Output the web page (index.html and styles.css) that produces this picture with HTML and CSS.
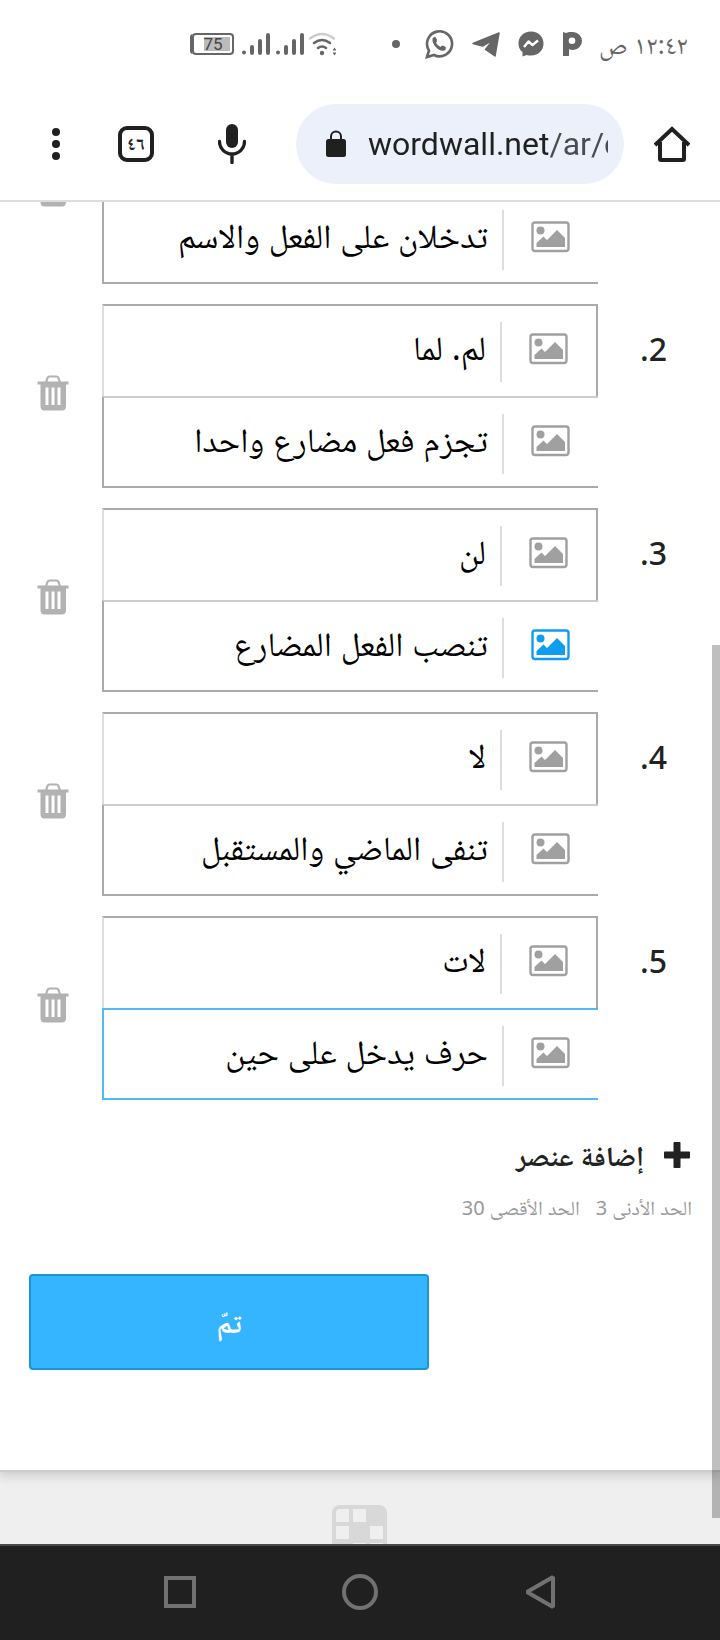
FILE: index.html
```html
<!DOCTYPE html>
<html lang="ar" dir="rtl">

<head>
    <meta charset="UTF-8">
    <meta name="viewport" content="width=device-width, initial-scale=1.0">
    <title>Wordwall</title>
    <link rel="stylesheet" href="styles.css">
</head>

<body>
    <!-- shared icons -->
    <svg class="sprite" aria-hidden="true">
        <symbol id="picture" viewBox="0 0 40 32">
            <rect x="1.5" y="1.5" width="36" height="28.5" rx="2.5" fill="none" stroke="currentColor" stroke-width="2.4" />
            <circle cx="9.5" cy="9.5" r="4" fill="currentColor" />
            <path d="M5.5 26v-4l7-6.5 3.5 3.5 10-10 8 8v9z" fill="currentColor" />
        </symbol>
        <symbol id="trash" viewBox="0 0 32 36">
            <path d="M9 7.500l1.500-4.500q.6-1.500 2-1.500h7q1.400 0 2 1.500l1.500 4.500" fill="none" stroke="currentColor" stroke-width="2.200" />
            <path fill-rule="evenodd" fill="currentColor" d="M.5 6.500h31v3H29V31q0 4.500-4 4.500H7.500q-4 0-4-4.500V9.500h-3zM8.500 12.500v17.500h3V12.500zM14.500 12.500v17.500h3V12.500zM20.500 12.500v17.500h3V12.500z" />
        </symbol>
    </svg>

    <header class="status">
        <span class="time">١٢:٤٢ ص</span>
        <div class="apps">
            <svg width="20" height="26" viewBox="0 0 20 26">
                <path fill-rule="evenodd" fill="#666" d="M1 1l3 1 3-1h4a8.500 8.500 0 0 1 0 18q-3 0-4-1v7H1zM10 6.500a3.300 3.300 0 1 0 0 6.600 3.300 3.300 0 0 0 0-6.600z" />
            </svg>
            <svg width="26" height="26" viewBox="0 0 26 26">
                <path fill="#666" d="M13 .5C5.500.5.5 5.700.5 12.500c0 4 1.500 6.500 4 8.500v4.500l4.200-1.500c1.300.4 2.700.5 4.300.5 7.500 0 12.500-5.200 12.500-12S20.500.5 13 .5z" />
                <path fill="none" stroke="#fff" stroke-width="2.400" stroke-linejoin="round" d="M6 16l4.500-5.500 4 3.500 5.500-4.500" />
            </svg>
            <svg width="28" height="26" viewBox="0 0 28 26">
                <path fill="#666" stroke="#666" stroke-width="1.500" stroke-linejoin="round" d="M1 12.500L27 2l-4 23-9.500-6.500 7.500-9.500-10.500 6z" />
            </svg>
            <svg width="30" height="32" viewBox="0 0 30 32">
                <path fill="none" stroke="#666" stroke-width="2.600" d="M3 29l2-6.500A12.500 12.500 0 1 1 10 27z" />
                <path fill="#666" d="M8.500 10.500q1-2 3-1.500 2 2.500 1.500 4.500l-1 1.200q1.500 3 4.500 4.300l1.500-1.500q2 0 4 2 0 2.500-2.500 3.200-4 .5-8-4-3.500-4-3-8.200z" />
            </svg>
            <svg width="8" height="8" viewBox="0 0 8 8"><circle cx="4" cy="4" r="4" fill="#666" /></svg>
        </div>
        <div class="signals">
            <svg width="28" height="24" viewBox="0 0 28 24" fill="none" stroke-linecap="round">
                <path stroke="#ccc" stroke-width="2.200" d="M2 6.500q12-9 24 0" />
                <path stroke="#666" stroke-width="2.600" d="M6 11q8-6 16 0M10 16q4-3 8 0" />
                <circle cx="14" cy="21" r="2.200" fill="#666" />
                <path fill="#666" d="M24.500 18.500l2-3 2 3zM24.500 20.500l2 3 2-3z" />
            </svg>
            <svg class="bars" width="62" height="22" viewBox="0 0 62 22" stroke="#666" stroke-width="4" stroke-linecap="round">
                <path d="M2 19.500v.1M10 14v6M18 8v12M26 2v18M36 19.500v.1M44 14v6M52 8v12M60 2v18" />
            </svg>
            <span class="battery"><span class="level">75</span></span>
        </div>
    </header>

    <nav class="toolbar">
        <button class="tool" type="button" aria-label="الصفحة الرئيسية">
            <svg width="36" height="36" viewBox="0 0 36 36" fill="none" stroke="#202020" stroke-width="4">
                <path stroke-linejoin="round" d="M6 16v17q0 1 1 1h22q1 0 1-1V16" />
                <path d="M1 19L18 3l17 16" />
            </svg>
        </button>
        <div class="address">
            <input class="url" type="text" aria-label="العنوان" value="wordwall.net/ar/create">
            <svg width="20" height="28" viewBox="0 0 20 28">
                <rect x="0" y="9" width="20" height="18" rx="2.500" fill="#202020" />
                <path d="M5 10V6.500a5 5 0 0 1 10 0V10" fill="none" stroke="#202020" stroke-width="2" />
            </svg>
        </div>
        <button class="tool" type="button" aria-label="بحث صوتي">
            <svg width="28" height="40" viewBox="0 0 28 40">
                <rect x="8" y="0" width="12" height="24" rx="6" fill="#202020" />
                <path d="M1.500 17.500a12.500 12.500 0 0 0 25 0M14 31v7.500" fill="none" stroke="#202020" stroke-width="3.400" stroke-linecap="round" />
            </svg>
        </button>
        <button class="tool" type="button" aria-label="علامات التبويب"><span class="tabs">٤٦</span></button>
        <button class="tool menu" type="button" aria-label="القائمة">
            <svg width="8" height="32" viewBox="0 0 8 32" fill="#202020">
                <circle cx="4" cy="4" r="4" />
                <circle cx="4" cy="16" r="4" />
                <circle cx="4" cy="28" r="4" />
            </svg>
        </button>
    </nav>

    <main class="view">
        <form class="editor">
            <ul class="items">
                <li class="item">
                    <span class="number"></span>
                    <div class="fields">
                        <div class="field word">
                            <input type="text" aria-label="الكلمة الأولى">
                        </div>
                        <div class="field meaning">
                            <button class="pic" type="button" aria-label="إضافة صورة"><svg width="40" height="32"><use href="#picture" /></svg></button>
                            <input type="text" aria-label="التعريف الأول" value="تدخلان على الفعل والاسم">
                        </div>
                    </div>
                    <button class="delete" type="button" aria-label="حذف"><svg width="32" height="36"><use href="#trash" /></svg></button>
                </li>
                <li class="item">
                    <label class="number" for="word2">2.</label>
                    <div class="fields">
                        <div class="field word">
                            <button class="pic" type="button" aria-label="إضافة صورة"><svg width="40" height="32"><use href="#picture" /></svg></button>
                            <input type="text" id="word2" value="لم. لما">
                        </div>
                        <div class="field meaning">
                            <button class="pic" type="button" aria-label="إضافة صورة"><svg width="40" height="32"><use href="#picture" /></svg></button>
                            <input type="text" aria-label="التعريف 2" value="تجزم فعل مضارع واحدا">
                        </div>
                    </div>
                    <button class="delete" type="button" aria-label="حذف"><svg width="32" height="36"><use href="#trash" /></svg></button>
                </li>
                <li class="item">
                    <label class="number" for="word3">3.</label>
                    <div class="fields">
                        <div class="field word">
                            <button class="pic" type="button" aria-label="إضافة صورة"><svg width="40" height="32"><use href="#picture" /></svg></button>
                            <input type="text" id="word3" value="لن">
                        </div>
                        <div class="field meaning">
                            <button class="pic active" type="button" aria-label="إضافة صورة"><svg width="40" height="32"><use href="#picture" /></svg></button>
                            <input type="text" aria-label="التعريف 3" value="تنصب الفعل المضارع">
                        </div>
                    </div>
                    <button class="delete" type="button" aria-label="حذف"><svg width="32" height="36"><use href="#trash" /></svg></button>
                </li>
                <li class="item">
                    <label class="number" for="word4">4.</label>
                    <div class="fields">
                        <div class="field word">
                            <button class="pic" type="button" aria-label="إضافة صورة"><svg width="40" height="32"><use href="#picture" /></svg></button>
                            <input type="text" id="word4" value="لا">
                        </div>
                        <div class="field meaning">
                            <button class="pic" type="button" aria-label="إضافة صورة"><svg width="40" height="32"><use href="#picture" /></svg></button>
                            <input type="text" aria-label="التعريف 4" value="تنفى الماضي والمستقبل">
                        </div>
                    </div>
                    <button class="delete" type="button" aria-label="حذف"><svg width="32" height="36"><use href="#trash" /></svg></button>
                </li>
                <li class="item">
                    <label class="number" for="word5">5.</label>
                    <div class="fields">
                        <div class="field word">
                            <button class="pic" type="button" aria-label="إضافة صورة"><svg width="40" height="32"><use href="#picture" /></svg></button>
                            <input type="text" id="word5" value="لات">
                        </div>
                        <div class="field meaning selected">
                            <button class="pic" type="button" aria-label="إضافة صورة"><svg width="40" height="32"><use href="#picture" /></svg></button>
                            <input type="text" aria-label="التعريف 5" value="حرف يدخل على حين">
                        </div>
                    </div>
                    <button class="delete" type="button" aria-label="حذف"><svg width="32" height="36"><use href="#trash" /></svg></button>
                </li>
            </ul>

            <button class="add" type="button">
                <svg width="26" height="26" viewBox="0 0 26 26"><path d="M9.500 1q0-1 1-1h5q1 0 1 1v8.500H25q1 0 1 1v5q0 1-1 1h-8.500V25q0 1-1 1h-5q-1 0-1-1v-8.500H1q-1 0-1-1v-5q0-1 1-1h8.500z" fill="#222" /></svg>
                <span>إضافة عنصر</span>
            </button>
            <p class="limits"><span>الحد الأدنى 3</span><span>الحد الأقصى 30</span></p>
            <button class="done" type="submit">تمّ</button>
        </form>

        <footer class="footer">
            <svg width="56" height="56" viewBox="0 0 56 56">
                <rect width="55" height="55" rx="8" fill="#d8d8d8" />
                <path fill="#efefef" d="M4 8q0-4 4-4h9v13H4zM21 4h13v13H21zM4 21h13v13H4zM38 21h13v13H38zM21 38h13v13H21zM38 38h13v13H38z" />
            </svg>
        </footer>
        <div class="thumb"></div>
    </main>

    <nav class="system">
        <button type="button" aria-label="رجوع">
            <svg width="36" height="36" viewBox="0 0 36 36"><path d="M31 3v30L5 18z" fill="none" stroke="#717171" stroke-width="4" stroke-linejoin="bevel" /></svg>
        </button>
        <button type="button" aria-label="الرئيسية">
            <svg width="36" height="36" viewBox="0 0 36 36"><circle cx="18" cy="18" r="16" fill="none" stroke="#717171" stroke-width="4" /></svg>
        </button>
        <button type="button" aria-label="التطبيقات">
            <svg width="36" height="36" viewBox="0 0 36 36"><rect x="4" y="4" width="28" height="28" fill="none" stroke="#717171" stroke-width="4" /></svg>
        </button>
    </nav>
</body>

</html>
```
FILE: styles.css
```css
* {
    box-sizing: border-box;
}

body {
    margin: 0;
    height: 100vh;
    display: flex;
    flex-direction: column;
    background-color: #fff;
    color: #222;
    font-family: "Noto Sans", "Noto Naskh Arabic", "Noto Sans Arabic", "DejaVu Sans", sans-serif;
}

button,
input {
    font-family: inherit;
    color: inherit;
    border: none;
    background: none;
    margin: 0;
    padding: 0;
    outline: none;
}

svg {
    display: block;
    flex: none;
}

.sprite {
    position: absolute;
    width: 0;
    height: 0;
}

/* phone status bar */
.status {
    flex: none;
    height: 88px;
    padding: 0 32px;
    display: flex;
    align-items: center;
    color: #666;
}

.time {
    font-size: 26px;
    line-height: 32px;
}

.apps {
    display: flex;
    align-items: center;
    gap: 18px;
    margin-right: 17px;
}

.apps svg:last-child {
    margin-right: 6px;
}

.signals {
    display: flex;
    align-items: center;
    gap: 4px;
    margin-right: 56px;
}

.battery {
    width: 42px;
    height: 22px;
    padding: 2px;
    border: 2px solid #666;
    border-radius: 4px;
    margin-right: 4px;
    box-shadow: -3px 0 0 -1px #666;
}

.level {
    display: block;
    background: linear-gradient(to left, #bbb 76%, #fff 76%);
    color: #444;
    font: 17px/14px Roboto, sans-serif;
    text-align: center;
}

/* browser toolbar */
.toolbar {
    flex: none;
    height: 114px;
    padding-left: 32px;
    border-bottom: 2px solid #ddd;
    display: flex;
    align-items: center;
}

.tool {
    width: 96px;
    height: 80px;
    display: flex;
    align-items: center;
    justify-content: center;
    flex: none;
}

.menu {
    width: 48px;
    margin-right: 8px;
}

.tabs {
    width: 36px;
    height: 36px;
    border: 4px solid #202020;
    border-radius: 9px;
    font-size: 18px;
    font-weight: bold;
    line-height: 26px;
}

.address {
    flex: 1;
    min-width: 0;
    height: 80px;
    margin-left: 16px;
    padding: 0 16px 0 30px;
    border-radius: 40px;
    background-color: #ebf0fa;
    display: flex;
    align-items: center;
    gap: 22px;
}

/* host in black, path in grey */
.url {
    flex: 1;
    min-width: 0;
    direction: ltr;
    font: 32px/40px Roboto, sans-serif;
    background: linear-gradient(to right, #202020 180px, #484b50 180px);
    -webkit-background-clip: text;
    background-clip: text;
    color: transparent;
}

/* page */
.view {
    position: relative;
    flex: 1;
    min-height: 0;
    overflow: hidden;
    display: flex;
    flex-direction: column;
    background-color: #efefef;
}

.editor {
    flex: none;
    padding-bottom: 100px;
    border-bottom: 2px solid #ccc;
    background-color: #fff;
    box-shadow: 0 0 12px 2px rgba(0, 0, 0, 0.2);
}

/* scrolled so that the first item is cut by the toolbar */
.items {
    list-style: none;
    margin: -102px 0 0;
    padding: 0;
    display: flex;
    flex-direction: column;
    gap: 20px;
}

.item {
    display: flex;
}

.number {
    width: 122px;
    padding: 23px 53px 0 0;
    font-size: 32px;
    font-weight: 500;
    line-height: 44px;
}

.fields {
    flex: 1;
    min-width: 0;
}

.field {
    height: 92px;
    padding-top: 16px;
    display: flex;
    border: 0 solid #aaa;
}

.word {
    border-width: 2px 2px 0;
    border-left-color: #ddd;
}

.meaning {
    border-width: 2px 0 2px 2px;
    border-top-color: #ccc;
}

.selected {
    border-color: #53b9f5;
}

.pic {
    width: 96px;
    height: 60px;
    padding-bottom: 6px;
    border-left: 2px solid #ddd;
    color: #a0a0a0;
    display: flex;
    align-items: center;
    justify-content: center;
    flex: none;
}

.active {
    color: #109df0;
}

.field input {
    flex: 1;
    min-width: 0;
    height: 60px;
    padding: 2px 14px 0;
    font-size: 34px;
    color: #000;
}

.delete {
    width: 102px;
    padding: 0 0 6px 4px;
    color: #b2b2b2;
    display: flex;
    align-items: center;
    justify-content: center;
}

.add {
    display: flex;
    align-items: center;
    gap: 20px;
    margin: 35px 30px 0;
    font-size: 28px;
    font-weight: bold;
    line-height: 40px;
}

.limits {
    display: flex;
    gap: 16px;
    margin: 19px 28px 0;
    font-size: 20px;
    line-height: 28px;
    color: #999;
}

.done {
    display: block;
    width: 400px;
    max-width: 90%;
    height: 96px;
    margin: 52px auto 0 29px;
    padding-top: 10px;
    border: 2px solid #1e95d3;
    border-radius: 4px;
    background-color: #35b4ff;
    color: #fff;
    font-size: 28px;
    font-weight: bold;
}

.footer {
    display: flex;
    justify-content: center;
    padding-top: 33px;
}

.thumb {
    position: absolute;
    right: 0;
    top: 33%;
    bottom: 26px;
    width: 8px;
    background-color: rgba(0, 0, 0, 0.25);
}

/* phone navigation */
.system {
    flex: none;
    height: 96px;
    padding-bottom: 2px;
    border-top: 2px solid #484848;
    background-color: #202020;
    display: flex;
    justify-content: center;
}

.system button {
    width: 25%;
    display: flex;
    align-items: center;
    justify-content: center;
}
```
